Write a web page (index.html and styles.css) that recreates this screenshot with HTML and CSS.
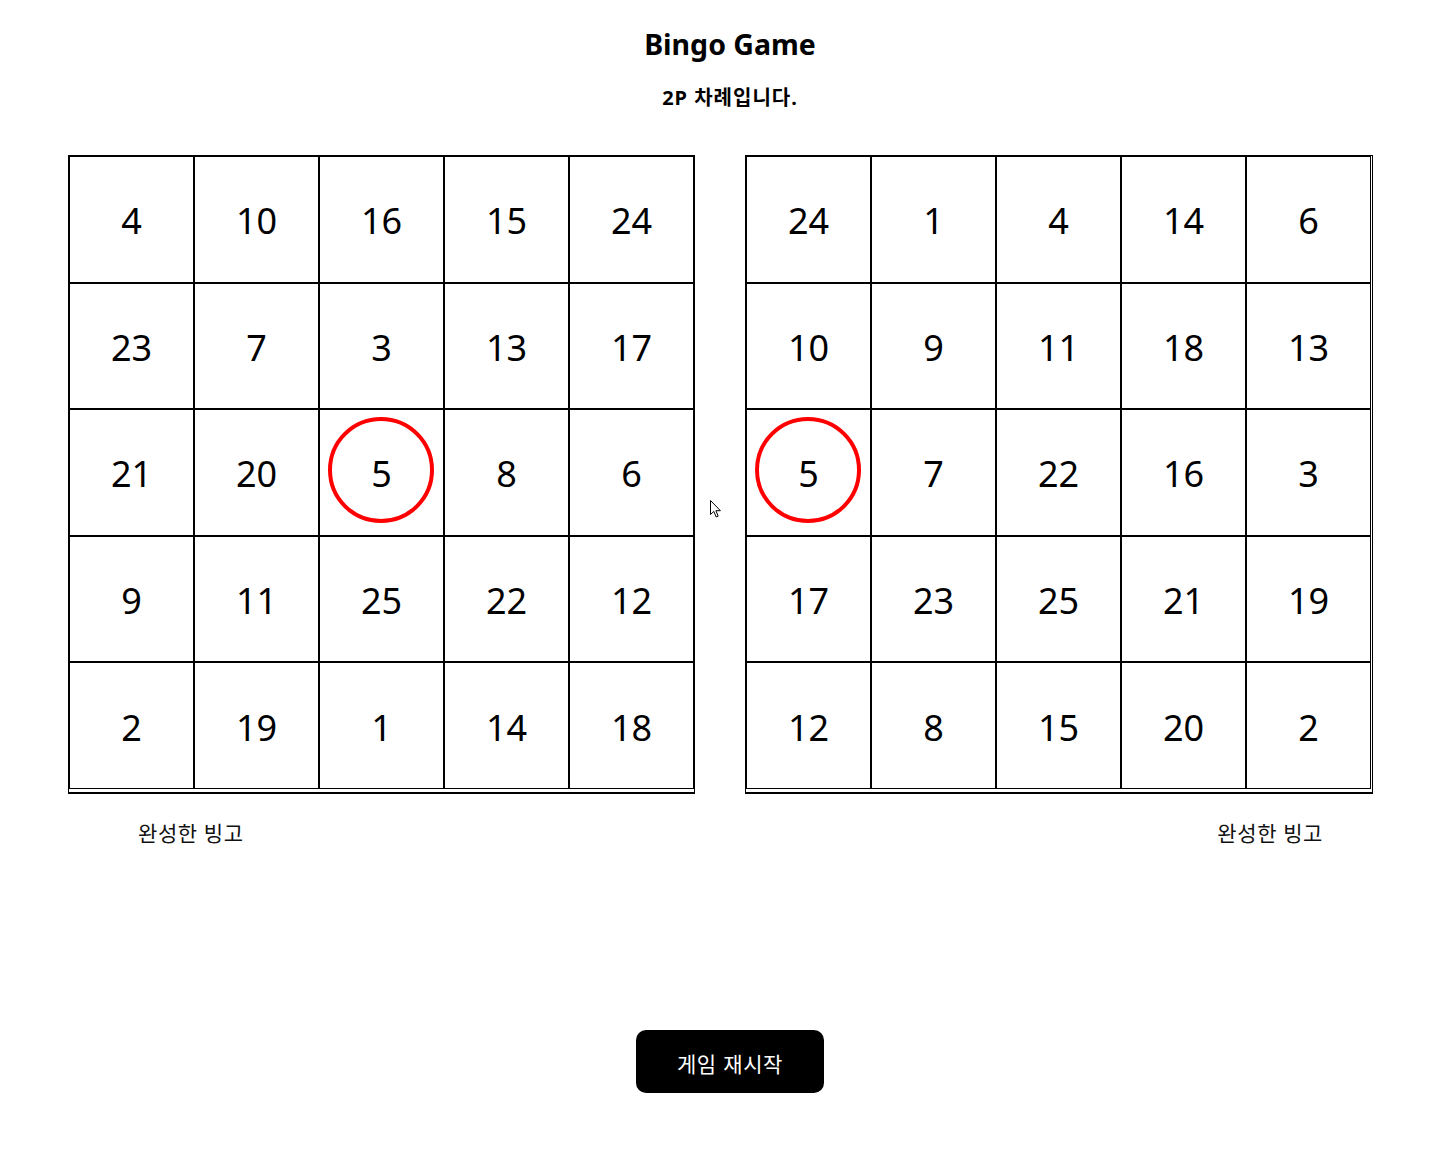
FILE: index.html
```html
<!DOCTYPE html>
<html lang="ko">
<head>
<meta charset="utf-8">
<title>Bingo Game</title>
<link rel="stylesheet" href="styles.css">
</head>
<body>
<div class="page">
  <header class="header">
    <h1 class="title">Bingo Game</h1>
    <p class="turn">2P 차례입니다.</p>
  </header>

  <section class="boards">
    <div class="board">
      <div class="cell">4</div><div class="cell">10</div><div class="cell">16</div><div class="cell">15</div><div class="cell">24</div>
      <div class="cell">23</div><div class="cell">7</div><div class="cell">3</div><div class="cell">13</div><div class="cell">17</div>
      <div class="cell">21</div><div class="cell">20</div><div class="cell marked"><span class="ring"></span>5</div><div class="cell">8</div><div class="cell">6</div>
      <div class="cell">9</div><div class="cell">11</div><div class="cell">25</div><div class="cell">22</div><div class="cell">12</div>
      <div class="cell">2</div><div class="cell">19</div><div class="cell">1</div><div class="cell">14</div><div class="cell">18</div>
    </div>
    <div class="board board-right">
      <div class="cell">24</div><div class="cell">1</div><div class="cell">4</div><div class="cell">14</div><div class="cell">6</div>
      <div class="cell">10</div><div class="cell">9</div><div class="cell">11</div><div class="cell">18</div><div class="cell">13</div>
      <div class="cell marked"><span class="ring"></span>5</div><div class="cell">7</div><div class="cell">22</div><div class="cell">16</div><div class="cell">3</div>
      <div class="cell">17</div><div class="cell">23</div><div class="cell">25</div><div class="cell">21</div><div class="cell">19</div>
      <div class="cell">12</div><div class="cell">8</div><div class="cell">15</div><div class="cell">20</div><div class="cell">2</div>
    </div>
  </section>

  <section class="labels">
    <span class="label">완성한 빙고</span>
    <span class="label">완성한 빙고</span>
  </section>

  <div class="actions">
    <button class="restart" type="button">게임 재시작</button>
  </div>

  <svg class="cursor" width="14" height="20" viewBox="0 0 14 20" aria-hidden="true">
    <path d="M1.5 1.5 L1.5 15.5 L4.8 12.4 L7.2 18 L9.2 17.1 L6.9 11.7 L11.4 11.7 Z" fill="#fff" stroke="#000" stroke-width="1" stroke-linejoin="round"/>
  </svg>
</div>
</body>
</html>
```

FILE: styles.css
```css
html, body {
  margin: 0;
  padding: 0;
  background: #fff;
}

body {
  font-family: "Noto Sans", "Noto Sans CJK KR", sans-serif;
  color: #000;
}

.page {
  position: relative;
  width: 1435px;
  min-height: 1131px;
  padding-top: 25px;
}

.header {
  padding-left: 25px;
  text-align: center;
}

.title {
  margin: 0;
  font-size: 28.5px;
  line-height: 38px;
  font-weight: 700;
}

.turn {
  margin: 23px 0 0;
  font-size: 20px;
  line-height: 24px;
  font-weight: 700;
  letter-spacing: 1px;
}

.boards {
  display: flex;
  gap: 50px;
  margin-top: 45px;
  padding-left: 68px;
}

.board {
  display: grid;
  grid-template-columns: repeat(5, 125px);
  grid-template-rows: repeat(5, 126.6px);
  border: 1px solid #000;
  border-bottom-width: 2px;
  padding-bottom: 3px;
}

.board-right {
  padding-right: 1px;
}

.cell {
  position: relative;
  display: flex;
  align-items: center;
  justify-content: center;
  border: 1px solid #000;
  font-size: 36px;
  line-height: 1;
  padding-top: 4px;
  box-sizing: border-box;
}

.ring {
  position: absolute;
  left: 50%;
  top: 50%;
  width: 98px;
  height: 98px;
  margin: -55px 0 0 -54px;
  border: 4.5px solid #f00;
  border-radius: 50%;
}

.labels {
  display: flex;
  justify-content: space-between;
  margin-top: 25px;
  padding: 0 112px 0 138px;
}

.label {
  font-size: 21px;
  line-height: 28px;
  letter-spacing: 0.6px;
  color: #111;
}

.actions {
  margin-top: 183px;
  padding-left: 25px;
  text-align: center;
}

.restart {
  width: 188px;
  height: 63px;
  padding: 4px 0 0;
  border: 0;
  border-radius: 10px;
  background: #000;
  color: #fff;
  font-family: "Noto Sans CJK KR", "Noto Sans", sans-serif;
  font-size: 21px;
  letter-spacing: 0.6px;
  cursor: pointer;
}

.cursor {
  position: absolute;
  left: 709px;
  top: 499px;
}
```
